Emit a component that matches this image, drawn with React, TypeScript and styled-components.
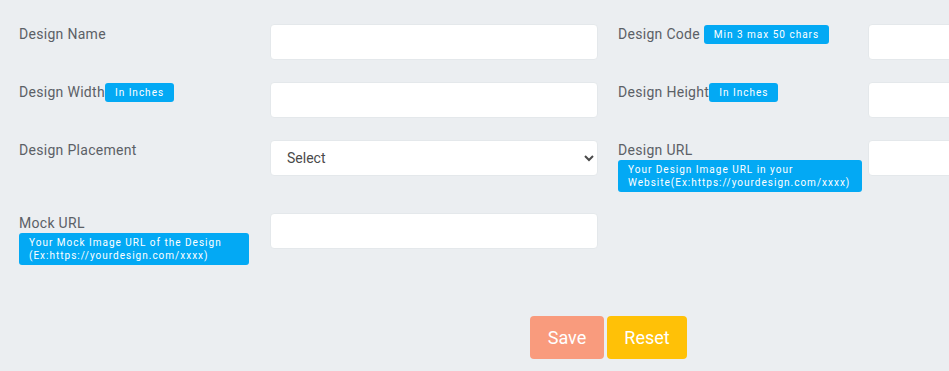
import React from 'react';
import styled, { createGlobalStyle } from 'styled-components';

const GlobalStyle = createGlobalStyle`
  html, body {
    margin: 0;
    padding: 0;
    background: #ebeef1;
    overflow: hidden;
  }
  body {
    font-family: Roboto, "Liberation Sans", Arial, sans-serif;
  }
`;

const Form = styled.form`
  width: 1217px;
  padding-top: 24px;
`;

const Row = styled.div<{ $gap?: number }>`
  display: flex;
  margin-bottom: ${(p) => p.$gap ?? 22}px;
`;

const Half = styled.div<{ $label: number }>`
  width: 599px;
  padding-left: 19px;
  box-sizing: border-box;
  display: grid;
  grid-template-columns: ${(p) => p.$label}px 328px;
  align-items: start;
`;

const Label = styled.label`
  display: block;
  font-size: 14px;
  letter-spacing: 0.3px;
  color: #5b6066;
  line-height: 18px;
  padding-top: 1px;
`;

const Badge = styled.span`
  display: inline-block;
  vertical-align: 1px;
  background: #03a9f4;
  color: #fff;
  font-size: 10px;
  letter-spacing: 1px;
  line-height: 19px;
  padding: 0 10px;
  border-radius: 3px;
`;

const NoteBadge = styled.div<{ $width: number }>`
  width: ${(p) => p.$width}px;
  box-sizing: border-box;
  margin-top: 1px;
  background: #03a9f4;
  color: #fff;
  font-size: 10px;
  letter-spacing: 1px;
  line-height: 13px;
  padding: 3px 10px;
  border-radius: 3px;
`;

const Input = styled.input`
  width: 328px;
  height: 36px;
  box-sizing: border-box;
  border: 1px solid #e4e8eb;
  border-radius: 4px;
  background: #fff;
  outline: none;
  padding: 0 12px;
  font-family: inherit;
`;

const Select = styled.select`
  width: 328px;
  height: 36px;
  box-sizing: border-box;
  border: 1px solid #e4e8eb;
  border-radius: 4px;
  background: #fff;
  padding: 0 12px;
  font-family: Roboto, "Liberation Sans", Arial, sans-serif;
  font-size: 14px;
  color: #4a4a4a;
  outline: none;
`;

const Actions = styled.div`
  display: flex;
  justify-content: center;
  gap: 3px;
  margin-top: 51px;
`;

const Button = styled.button<{ $color: string; $width: number }>`
  width: ${(p) => p.$width}px;
  height: 43px;
  border: none;
  border-radius: 4px;
  background: ${(p) => p.$color};
  color: #fff;
  font-family: Roboto, "Liberation Sans", Arial, sans-serif;
  font-size: 18px;
  cursor: pointer;
`;

function App() {
  return (
    <>
      <GlobalStyle />
      <Form onSubmit={(e) => e.preventDefault()}>
        <Row>
          <Half $label={251}>
            <Label>Design Name</Label>
            <Input type="text" />
          </Half>
          <Half $label={250}>
            <Label>
              Design Code <Badge>Min 3 max 50 chars</Badge>
            </Label>
            <Input type="text" />
          </Half>
        </Row>
        <Row>
          <Half $label={251}>
            <Label>
              Design Width<Badge>In Inches</Badge>
            </Label>
            <Input type="text" />
          </Half>
          <Half $label={250}>
            <Label>
              Design Height<Badge>In Inches</Badge>
            </Label>
            <Input type="text" />
          </Half>
        </Row>
        <Row $gap={21}>
          <Half $label={251}>
            <Label>Design Placement</Label>
            <Select defaultValue="">
              <option value="">Select</option>
              <option value="front">Front</option>
              <option value="back">Back</option>
            </Select>
          </Half>
          <Half $label={250}>
            <div>
              <Label>Design URL</Label>
              <NoteBadge $width={244}>
                Your Design Image URL in your
                <br />
                Website(Ex:https://yourdesign.com/xxxx)
              </NoteBadge>
            </div>
            <Input type="text" />
          </Half>
        </Row>
        <Row $gap={0}>
          <Half $label={251}>
            <div>
              <Label>Mock URL</Label>
              <NoteBadge $width={230}>
                Your Mock Image URL of the Design
                <br />
                (Ex:https://yourdesign.com/xxxx)
              </NoteBadge>
            </div>
            <Input type="text" />
          </Half>
        </Row>
        <Actions>
          <Button type="submit" $color="#f99b7d" $width={74}>
            Save
          </Button>
          <Button type="reset" $color="#ffc107" $width={80}>
            Reset
          </Button>
        </Actions>
      </Form>
    </>
  );
}

export default App;
